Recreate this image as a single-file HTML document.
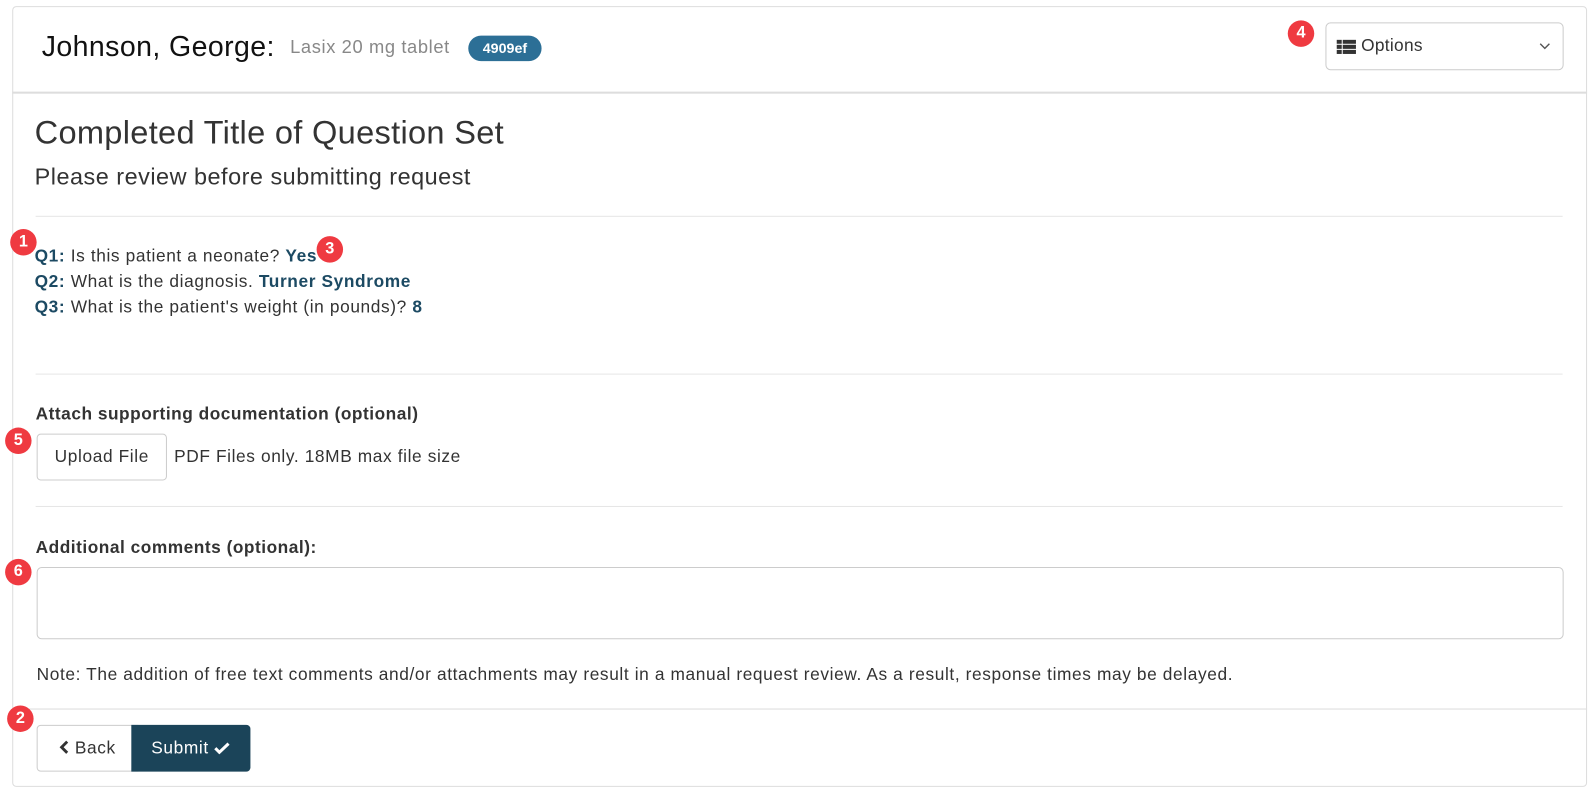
<!DOCTYPE html>
<html><head><meta charset="utf-8"><style>
*{box-sizing:border-box;margin:0;padding:0}
body{width:1596px;height:796px;background:#fff;font-family:"Liberation Sans",Arial,sans-serif;color:#333;position:relative;overflow:hidden}
#w{position:absolute;left:0;top:0;width:1568px;height:782px;transform:scale(1.018);transform-origin:0 0}
.panel{position:absolute;left:12px;top:6px;width:1547px;height:767px;border:1px solid #ddd;border-radius:4px}
.hdr{position:absolute;left:12px;top:6px;width:1547px;height:86px;border-bottom:2px solid #ddd}
.abs{position:absolute;white-space:nowrap}
.t{font-size:17px;letter-spacing:0.6px}
.badge{position:absolute;width:26px;height:26px;border-radius:50%;background:#ef3a41;color:#fff;font-weight:bold;font-size:16px;text-align:center;line-height:26px}
.hr{position:absolute;left:35px;width:1500px;height:1px;background:#e6e6e6}
.q{color:#333}
.q b{color:#1c4a63}
.btn{position:absolute;border:1px solid #ccc;border-radius:4px;background:#fff;color:#333;text-align:center}
</style></head><body><div id="w">
<div class="panel"></div>
<div class="hdr"></div>
<div class="abs" style="left:41px;top:30px;font-size:28px;letter-spacing:0.4px;color:#111">Johnson, George:</div>
<div class="abs" style="left:285px;top:36px;font-size:18px;letter-spacing:0.6px;color:#888">Lasix 20 mg tablet</div>
<div class="abs" style="left:460px;top:35px;width:72px;height:25px;border-radius:13px;background:#2c6f96;color:#fff;font-weight:bold;font-size:14px;text-align:center;line-height:25px">4909ef</div>
<div class="btn" style="left:1302px;top:22px;width:234px;height:47px;border-radius:5px"></div>
<svg class="abs" style="left:1313px;top:39px" width="19" height="14" viewBox="0 0 19 14"><g fill="#333"><rect x="0" y="0" width="5" height="4"/><rect x="6" y="0" width="13" height="4"/><rect x="0" y="5" width="5" height="4"/><rect x="6" y="5" width="13" height="4"/><rect x="0" y="10" width="5" height="4"/><rect x="6" y="10" width="13" height="4"/></g></svg>
<div class="abs t" style="left:1337px;top:35px;letter-spacing:0.3px;color:#333">Options</div>
<svg class="abs" style="left:1512px;top:42px" width="11" height="7" viewBox="0 0 11 7"><path d="M1 1l4.5 4.5L10 1" fill="none" stroke="#555" stroke-width="1.4"/></svg>
<div class="badge" style="left:1265px;top:20px">4</div>

<div class="abs" style="left:34px;top:112px;font-size:32px;letter-spacing:0.3px;color:#333">Completed Title of Question Set</div>
<div class="abs" style="left:34px;top:160px;font-size:23px;letter-spacing:0.5px;color:#333">Please review before submitting request</div>
<div class="hr" style="top:212px"></div>
<div class="abs q t" style="left:34px;top:242px"><b>Q1:</b> Is this patient a neonate? <b>Yes</b></div>
<div class="abs q t" style="left:34px;top:267px"><b>Q2:</b> What is the diagnosis. <b>Turner Syndrome</b></div>
<div class="abs q t" style="left:34px;top:292px"><b>Q3:</b> What is the patient's weight (in pounds)? <b>8</b></div>
<div class="badge" style="left:10px;top:225px">1</div>
<div class="badge" style="left:311px;top:232px">3</div>
<div class="hr" style="top:367px"></div>
<div class="abs t" style="left:35px;top:397px;font-weight:bold;letter-spacing:0.5px;color:#333">Attach supporting documentation (optional)</div>
<div class="btn t" style="left:36px;top:426px;width:128px;height:46px;line-height:44px">Upload File</div>
<div class="abs t" style="left:171px;top:439px;color:#333">PDF Files only. 18MB max file size</div>
<div class="badge" style="left:5px;top:420px">5</div>
<div class="hr" style="top:497px"></div>
<div class="abs t" style="left:35px;top:528px;font-weight:bold;letter-spacing:0.5px;color:#333">Additional comments (optional):</div>
<div class="btn" style="left:36px;top:557px;width:1500px;height:71px;border-radius:5px"></div>
<div class="badge" style="left:5px;top:549px">6</div>
<div class="abs t" style="left:36px;top:653px;color:#333">Note: The addition of free text comments and/or attachments may result in a manual request review. As a result, response times may be delayed.</div>
<div class="abs" style="left:12px;top:696px;width:1547px;height:1px;background:#ddd"></div>
<div class="btn t" style="left:36px;top:712px;width:100px;height:46px;border-radius:4px 0 0 4px;line-height:44px"><svg width="10" height="14" viewBox="0 0 10 14" style="vertical-align:-1px"><path d="M8 1.5L2.5 7 8 12.5" fill="none" stroke="#333" stroke-width="2.8"/></svg> Back</div>
<div class="abs t" style="left:129px;top:712px;width:117px;height:46px;background:#1b4459;border-radius:0 4px 4px 0;color:#fff;text-align:center;line-height:46px">Submit <svg width="16" height="12" viewBox="0 0 16 12" style="vertical-align:-1px"><path d="M1.5 6l4 4 9-8.5" fill="none" stroke="#fff" stroke-width="3"/></svg></div>
<div class="badge" style="left:7px;top:693px">2</div>
</div></body></html>
